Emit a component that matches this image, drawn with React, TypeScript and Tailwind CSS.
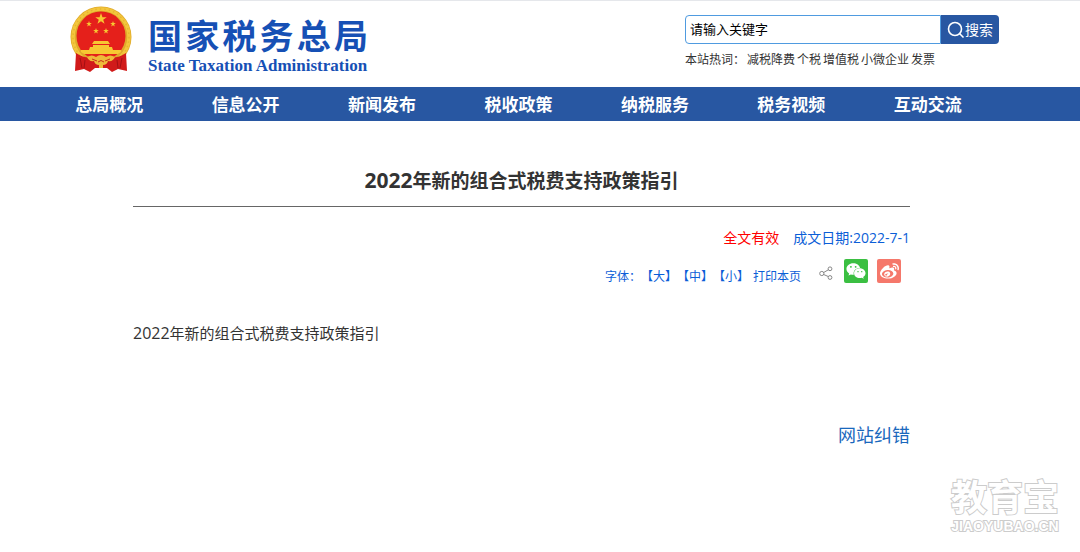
import { FaWeibo, FaWeixin } from "react-icons/fa";

const NAV_ITEMS: string[] = [
  "总局概况",
  "信息公开",
  "新闻发布",
  "税收政策",
  "纳税服务",
  "税务视频",
  "互动交流",
];

const HOT_WORDS: string[] = ["减税降费", "个税", "增值税", "小微企业", "发票"];

const STAR = "M0 -1 L.24 -.31 .95 -.31 .37 .12 .59 .81 0 .38 -.59 .81 -.37 .12 -.95 -.31 -.24 -.31Z";

function Emblem() {
  return (
    <svg viewBox="0 0 62 66" className="h-[66px] w-[62px] shrink-0" aria-hidden="true">
      <circle cx="31" cy="31" r="30.500" fill="#dfa92a" />
      <circle cx="31" cy="31" r="28" fill="none" stroke="#f3c63c" strokeWidth="3.500" />
      <circle cx="31" cy="31" r="28" fill="none" stroke="#e6b430" strokeWidth="1.500" strokeDasharray="1.500 3" />
      <circle cx="31" cy="30" r="24.500" fill="#e5201b" />
      <g fill="#f7c832">
        <path d={STAR} transform="translate(31 13) scale(6)" />
        <path d={STAR} transform="translate(19 18) scale(3)" />
        <path d={STAR} transform="translate(43 18) scale(3)" />
        <path d={STAR} transform="translate(26 25) scale(3)" />
        <path d={STAR} transform="translate(36 25) scale(3)" />
        <path d="M24 35h14l2 3H22zM23 39h16v2H23zM20 41h22l1 3H19zM11 44h40v2l-3 2H14l-3-2z" />
      </g>
      <path d="M6 47q9 6 18 4h14q9 2 18-4l1 18-9-2-6 3-5-4h-12l-5 4-6-3-9 2z" fill="#d11a1a" />
      <path
        d="M17 51q5-3 9 0 5-4 10 0 4-3 9 0-2 5-7 4-1 4-5 4v3h-4v-3q-4 0-5-4-5 1-7-4z"
        fill="#eeb93a"
      />
      <path d="M22 53l5 2M40 53l-5 2M28 56q3-3 6 0" fill="none" stroke="#c9301a" />
      <path d="M10 52l2 10M15 54l-1 8M52 52l-2 10M47 54l1 8" stroke="#a30f14" />
    </svg>
  );
}

function Header() {
  return (
    <header className="flex h-[87px] items-start justify-between border-t border-gray-200 pr-[81px] pl-[70px]">
      <a href="#" className="flex items-start pt-[5px] text-[#1650b5]">
        <Emblem />
        <div className="ml-4 w-[220px] pt-2">
          <div className="flex justify-between text-[34px] leading-[44px] font-bold">
            {"国家税务总局".split("").map((char) => (
              <span key={char}>{char}</span>
            ))}
          </div>
          <div className="font-['Liberation_Serif',serif] text-[17px] leading-4 font-bold whitespace-nowrap">
            State Taxation Administration
          </div>
        </div>
      </a>
      <div className="w-[314px] pt-[14px]">
        <form className="flex h-[29px]">
          <input
            type="text"
            aria-label="请输入关键字"
            placeholder="请输入关键字"
            className="min-w-0 flex-1 rounded-l border border-[#4f9be0] px-1 text-[13px] text-black placeholder:text-black"
          />
          <button
            type="button"
            className="flex w-[58px] items-center justify-center rounded-r bg-[#2857a2] text-sm text-white"
          >
            <svg viewBox="0 0 18 18" className="size-[18px]" fill="none" stroke="currentColor" strokeWidth="1.600">
              <circle cx="8" cy="8" r="6.500" />
              <path d="M12.500 12.500l4 4" />
            </svg>
            搜索
          </button>
        </form>
        <div className="mt-1.5 flex gap-0.5 text-xs leading-5 text-[#333]">
          <span>本站热词：</span>
          {HOT_WORDS.map((word) => (
            <a key={word} href="#">
              {word}
            </a>
          ))}
        </div>
      </div>
    </header>
  );
}

function Share() {
  return (
    <div className="flex items-center">
      <svg viewBox="0 0 14 14" className="mt-1 mr-[11px] size-3.5" fill="none" stroke="#888">
        <circle cx="2.800" cy="7.500" r="2.100" />
        <circle cx="11" cy="2.800" r="1.900" />
        <circle cx="11" cy="11.500" r="1.900" />
        <path d="M4.700 6.500l4.600-2.700M4.700 8.500l4.500 2" />
      </svg>
      <a href="#" aria-label="微信" className="mr-[9px] flex size-6 items-center justify-center rounded-xs bg-[#3bbf42] text-white">
        <FaWeixin size={20} />
      </a>
      <a href="#" aria-label="微博" className="flex size-6 items-center justify-center rounded-xs bg-[#f5786b] text-white">
        <FaWeibo size={19} />
      </a>
    </div>
  );
}

export default function App() {
  return (
    <div className="relative min-h-screen bg-white font-['Open_Sans','Noto_Sans_CJK_SC',sans-serif]">
      <Header />

      <nav className="flex h-[34px] items-center bg-[#2857a2] pt-0.5 pr-[84px] pl-[41px] text-[17px] font-bold text-white">
        {NAV_ITEMS.map((item) => (
          <a key={item} href="#" className="flex-1 text-center">
            {item}
          </a>
        ))}
      </nav>

      <main className="mr-[170px] ml-[133px] pt-11">
        <h1 className="border-b border-[#666] pb-2.5 text-center text-[19px] leading-[30px] font-bold text-[#333]">
          <span className="text-[21px]">2022</span>年新的组合式税费支持政策指引
        </h1>

        <div className="mt-5 flex justify-end gap-[14px] text-sm leading-[22px] text-[#0b5ed7]">
          <span className="text-[#f00]">全文有效</span>
          <span>成文日期:2022-7-1</span>
        </div>

        {/* Font size, print and share */}
        <div className="mt-2.5 mr-[9px] flex items-start justify-end text-xs leading-6 text-[#0b5ed7]">
          <div className="flex pt-1.5">
            <span>字体：</span>
            <button type="button">【大】</button>
            <button type="button">【中】</button>
            <button type="button">【小】</button>
            <button type="button" className="mr-[18px] ml-1">
              打印本页
            </button>
          </div>
          <Share />
        </div>

        <p className="mt-8 text-[15px] leading-6 text-[#333]">
          <span className="text-base">2022</span>年新的组合式税费支持政策指引
        </p>

        <div className="mt-[78px] text-right text-lg leading-6 text-[#1a68bd]">
          <a href="#">网站纠错</a>
        </div>
      </main>

      {/* Watermark */}
      <div className="absolute right-5 bottom-5 w-[110px] text-center text-white select-none [-webkit-text-stroke:2px_#ccc] [paint-order:stroke_fill]">
        <div className="text-[36px] leading-9 font-bold">教育宝</div>
        <div className="pt-1 font-['Liberation_Sans',sans-serif] text-sm leading-3 font-bold">JIAOYUBAO.CN</div>
      </div>
    </div>
  );
}
